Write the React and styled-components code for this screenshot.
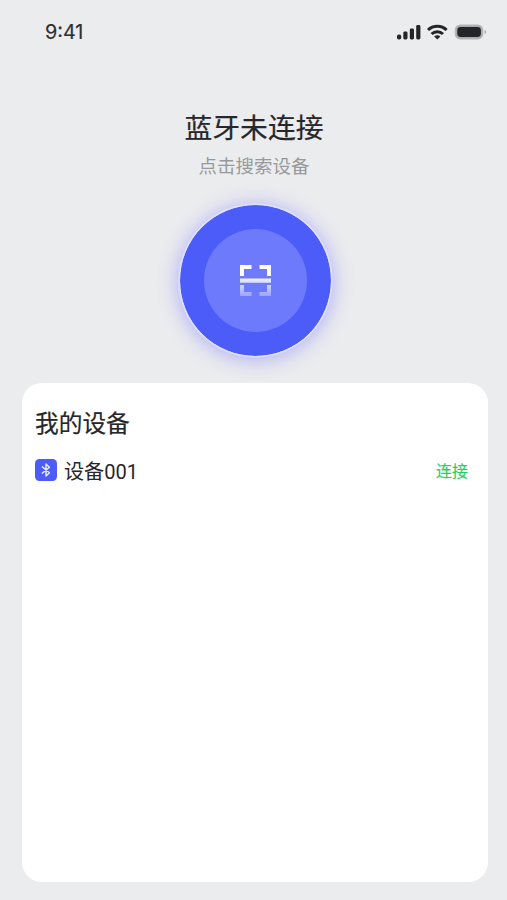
import React from 'react'
import styled, { createGlobalStyle } from 'styled-components'

const GlobalStyle = createGlobalStyle`
*{box-sizing:border-box;}
body{
  margin:0;
  background-color:#ebecee;
  font-family:"Noto Sans CJK SC", sans-serif;
}
`;
const Container = styled.div`
width:507px;
height:900px;
background-color:#ebecee;
display:flex;
flex-direction:column;
overflow:hidden;
`;
const StatusBar = styled.div`
height:64px;
padding:0 19px 0 45px;
display:flex;
align-items:center;
justify-content:space-between;
`;
const Time = styled.div`
font-family:Inter, sans-serif;
font-size:19.8px;
font-weight:400;
color:#2f3033;
-webkit-text-stroke:0.2px #2f3033;
`;
const StatusIcons = styled.svg`
width:92px;
height:20px;
display:block;
`;
const Header = styled.div`
height:319px;
padding:41px 0 0 4px;
display:flex;
flex-direction:column;
align-items:center;
`;
const Title = styled.h1`
margin:0 3px 0 0;
font-size:27.8px;
line-height:42px;
font-weight:400;
color:#26272a;
-webkit-text-stroke:0.2px #26272a;
`;
const Hint = styled.div`
margin:4px 3px 0 0;
font-size:18.5px;
line-height:28px;
color:#98999b;
`;
const ScanButton = styled.button`
margin:25px 0 0 0;
padding:0;
flex:none;
width:153px;
height:153px;
border-radius:50%;
border:1.5px solid #dfe1ff;
background-color:#4c5cf8;
background-clip:padding-box;
box-shadow:0 0 0 0.5px #dfe1ff, 0 2px 18px 3px rgba(92,88,255,0.34);
display:flex;
align-items:center;
justify-content:center;
cursor:pointer;
`;
const ScanInner = styled.div`
width:103px;
height:103px;
border-radius:50%;
background-color:#6d7afb;
display:flex;
align-items:center;
justify-content:center;
`;
const ScanSvg = styled.svg`
width:31px;
height:31px;
display:block;
`;
const Card = styled.div`
width:466px;
height:499px;
margin-left:22px;
padding:18px 20px 0 13px;
border-radius:20px;
background-color:#fff;
`;
const CardTitle = styled.h2`
margin:0;
font-size:23.7px;
line-height:42px;
font-weight:400;
color:#26272a;
-webkit-text-stroke:0.2px #26272a;
`;
const DeviceRow = styled.div`
margin-top:12px;
height:30px;
display:flex;
align-items:center;
`;
const DeviceIcon = styled.svg`
width:22px;
height:22px;
display:block;
`;
const DeviceName = styled.div`
flex:1;
margin-left:7px;
padding-top:3px;
font-family:Roboto, "Noto Sans CJK SC", sans-serif;
font-size:20.1px;
line-height:30px;
color:#26272a;
`;
const Connect = styled.div`
font-size:16px;
line-height:24px;
color:#26d057;
-webkit-text-stroke:0.15px #26d057;
cursor:pointer;
`;

const Status = () => (
  <StatusIcons viewBox="0 0 92 20">
    <g fill="#242529">
      <rect x="1" y="12.5" width="4.2" height="5" rx="1.8" />
      <rect x="7.3" y="9.5" width="4.2" height="8" rx="1.4" />
      <rect x="13.8" y="6.5" width="4.2" height="11" rx="1.4" />
      <rect x="20.2" y="3" width="4.2" height="14.5" rx="1.4" />
    </g>
    <g fill="none" stroke="#242529" strokeWidth="3">
      <path d="M32 8a13.3 13.3 0 0 1 18.6 0" />
      <path d="M35.6 12a8.2 8.2 0 0 1 11.4 0" />
    </g>
    <path d="M38.2 14.6a4.3 4.3 0 0 1 6.2 0L41.3 17.6z" fill="#242529" />
    <rect x="59.3" y="3.1" width="27.4" height="13.8" rx="5" fill="#a9aaac" stroke="#b4b5b7" strokeWidth="1.2" />
    <rect x="61.3" y="5" width="23.6" height="10" rx="3.4" fill="#242529" />
    <path d="M88.6 7.8c2 .8 2 3.6 0 4.4z" fill="#a9aaac" />
  </StatusIcons>
)

const ScanIcon = () => (
  <ScanSvg viewBox="0 0 31 31">
    <defs>
      <linearGradient id="fade" x1="0" y1="0" x2="0" y2="31" gradientUnits="userSpaceOnUse">
        <stop offset="0" stopColor="#fff" />
        <stop offset="0.32" stopColor="#fff" />
        <stop offset="1" stopColor="#fff" stopOpacity="0.32" />
      </linearGradient>
    </defs>
    <path
      fill="url(#fade)"
      d="M0 0H11.5V4H4V11H0z M19.5 0H31V11H27V4H19.5z M0 13.5H31V17.7H0z M0 20H4V27H11.5V31H0z M27 20H31V31H19.5V27H27z"
    />
  </ScanSvg>
)

const BluetoothIcon = () => (
  <DeviceIcon viewBox="0 0 22 22">
    <rect width="22" height="22" rx="4.5" fill="#4c5cf8" />
    <path d="M7.4 7.9L14.4 13.8L11 17V5L14.4 8.2L7.4 14.1" fill="none" stroke="#e4e7ff" strokeWidth="1.5" strokeLinejoin="round" strokeLinecap="round" />
  </DeviceIcon>
)

const devices = [{ id: 1, name: '设备001' }]

const App = () => {
  return (
    <>
      <GlobalStyle />
      <Container>
        <StatusBar>
          <Time>9:41</Time>
          <Status />
        </StatusBar>
        <Header>
          <Title>蓝牙未连接</Title>
          <Hint>点击搜索设备</Hint>
          <ScanButton>
            <ScanInner>
              <ScanIcon />
            </ScanInner>
          </ScanButton>
        </Header>
        <Card>
          <CardTitle>我的设备</CardTitle>
          {devices.map((d) => (
            <DeviceRow key={d.id}>
              <BluetoothIcon />
              <DeviceName>{d.name}</DeviceName>
              <Connect>连接</Connect>
            </DeviceRow>
          ))}
        </Card>
      </Container>
    </>
  )
}

export default App
